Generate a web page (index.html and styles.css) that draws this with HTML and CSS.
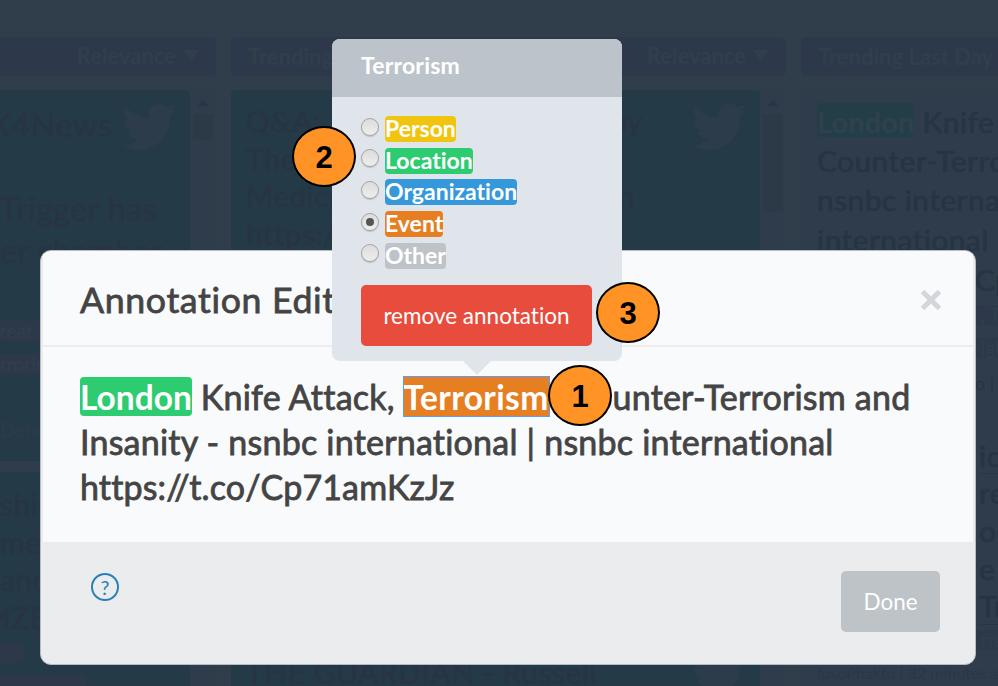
FILE: index.html
```html
<!DOCTYPE html>
<html lang="en">
<head>
<meta charset="utf-8">
<title>Annotation Editor</title>
<link rel="stylesheet" href="styles.css">
</head>
<body>
<svg class="defs" aria-hidden="true">
  <symbol id="bird" viewBox="0 0 53 46">
    <path d="M0 41C6 42 11 40 16 36C11 35 8 33 6 28H11C5 26 2 22 2 16L7 17C2 13 1 7 3 2C9 9 17 13 27 14C25 6 30 0 38 0C41 0 44 1 46 3L53 1C52 4 50 5 48 7L53 6C52 9 50 10 48 12C49 31 35 46 17 46C11 46 5 44 0 41Z"/>
  </symbol>
</svg>
<main class="board">
  <section class="column column-a">
    <header class="column-head"><span class="sort">Relevance <i class="caret"></i></span></header>
    <div class="column-body">
      <div class="cards">
        <article class="card first">
          <svg class="bird"><use href="#bird"/></svg>
          <div class="copy"><p class="out">K4News</p><p>&nbsp;</p><p>Trigger has</p><p>er chamber</p></div>
          <div class="tag">reat</div><div class="tag">rrorism</div><div class="details">Details</div>
        </article>
        <article class="card second">
          <div class="copy"><p class="ruled">shing</p><p>ment</p><p>and</p><p class="ruled out">MZE</p></div>
          <div class="tag short"></div><div class="tag medium"></div>
        </article>
      </div>
      <div class="scroll"><i class="up"></i><i class="thumb"></i></div>
    </div>
  </section>
  <section class="column column-b">
    <header class="column-head"><span>Trending</span><span class="sort">Relevance <i class="caret"></i></span></header>
    <div class="column-body">
      <div class="cards">
        <article class="card tall">
          <svg class="bird"><use href="#bird"/></svg>
          <div class="copy"><p><span>Q&amp;A:</span><span>ny</span></p><p>The</p><p class="ruled"><span>Medical</span><span class="in">n</span></p><p>https://</p></div>
        </article>
        <article class="card last">
          <svg class="bird"><use href="#bird"/></svg>
          <div class="copy"><p>THE GUARDIAN - Russell</p></div>
        </article>
      </div>
      <div class="scroll"><i class="up"></i><i class="thumb"></i></div>
    </div>
  </section>
  <section class="column column-c">
    <header class="column-head"><span>Trending Last Day</span></header>
    <div class="feed">
      <div class="copy"><p><mark>London</mark> Knife</p><p>Counter-Terrorism</p><p>nsnbc international</p><p>international</p><p class="edge">Cp71</p></div>
      <div class="tag">, Te</div><div class="tag">igh</div><div class="by">o | C</div>
      <div class="copy more"><p class="ruled">ic</p><p>re</p><p>oo</p><p>e a</p><p class="ruled">Tru</p></div>
      <div class="tag">risi</div>
      <div class="author">IpsoPhakto | 32 minutes ago</div>
    </div>
  </section>
</main>

<div class="modal">
  <header class="modal-head"><h1>Annotation Editor</h1>
    <svg class="close" viewBox="0 0 24 24"><path d="M3.5 3.5L20.5 20.5M20.5 3.5L3.5 20.5"/></svg>
  </header>
  <div class="modal-body">
    <p><span class="hit london">London</span><span class="mid"> Knife Attack, </span><span class="hit terrorism">Terrorism</span><span class="rest">, Counter-Terrorism and</span></p>
    <p class="l2">Insanity - nsnbc international | nsnbc international</p>
    <p class="l3">https://t.co/Cp71amKzJz</p>
  </div>
  <footer class="modal-foot"><span class="help">?</span><button class="done">Done</button></footer>
</div>

<div class="popover">
  <header>Terrorism</header>
  <div class="popover-body">
    <label><i class="radio"></i><span class="type person">Person</span></label>
    <label><i class="radio"></i><span class="type location">Location</span></label>
    <label><i class="radio"></i><span class="type organization">Organization</span></label>
    <label><i class="radio on"></i><span class="type event">Event</span></label>
    <label><i class="radio"></i><span class="type other">Other</span></label>
    <button class="remove">remove annotation</button>
  </div>
</div>
<div class="badge one">1</div>
<div class="badge two">2</div>
<div class="badge three">3</div>
</body>
</html>
```
FILE: styles.css
```css
* { box-sizing: border-box; }
body { margin: 0; width: 998px; height: 686px; overflow: hidden; position: relative; background: #303d4a; font-family: Lato, sans-serif; font-variant-ligatures: none; }
p, h1 { margin: 0; white-space: nowrap; }
button { border: 0; font-family: inherit; padding: 0; font-variant-ligatures: none; }
.defs { position: absolute; width: 0; height: 0; }

/* dimmed board */
.board { display: grid; grid-template-columns: 216px 555px 197px; gap: 15px; padding-top: 37px; width: 998px; height: 686px; overflow: hidden; color: #283445; }
.column { min-width: 0; overflow: hidden; }
.column-head { height: 39px; border-radius: 5px; background: #2d394a; color: #303f4c; font-weight: 700; font-size: 22px; line-height: 40px; padding: 0 17px; display: flex; justify-content: space-between; white-space: nowrap; }
.column-a .column-head { border-radius: 0 5px 5px 0; }
.column-c .column-head { border-radius: 5px 0 0 5px; }
.sort { margin-left: auto; display: flex; align-items: center; gap: 7px; line-height: 36px; padding-bottom: 2px; }
.caret { border: 8px solid transparent; border-top: 11px solid #303f4c; border-bottom: 0; }
.column-body { display: flex; gap: 3px; margin-top: 14px; height: 600px; background: #2f3c4b; }
.cards { flex: 1; min-width: 0; }
.scroll { width: 23px; padding: 10px 3px 0 0; }
.up { display: block; width: 0; margin: 0 auto 8px; border: 5px solid transparent; border-bottom: 6px solid #293544; border-top: 0; }
.thumb { display: block; height: 26px; background: #2c3947; }
.column-b .thumb { height: 98px; }
.card { position: relative; background: #243a46; overflow: hidden; }
.card .copy, .feed .copy { -webkit-text-stroke: 0.7px; letter-spacing: .5px; }
.bird { position: absolute; right: 15px; top: 14px; width: 53px; height: 46px; fill: #2d3c4b; }
.first { height: 371px; border-radius: 0 5px 5px 0; padding-top: 14px; margin-bottom: 11px; }
.first .copy { font-size: 32px; line-height: 42px; }
.first .copy + .tag { margin-top: 49px; }
.first .out { margin-left: -10px; }
.tag { height: 20px; margin-bottom: 13px; background: #2d394a; color: #303f4c; font-size: 19px; line-height: 19px; white-space: nowrap; }
.details { color: #2d3a49; font-size: 19px; margin-top: 44px; }
.second { height: 240px; padding-top: 14px; }
.second .copy { font-size: 30px; line-height: 37.5px; }
.second .out { margin-left: -17px; }
.second .tag { margin: 7px 0 12px; border-radius: 0 5px 5px 0; }
.second .short { width: 24px; }
.second .medium { width: 86px; }
.ruled { box-shadow: inset 0 -1px #283746; }
.tall { height: 566px; border-radius: 5px 5px 0 0; padding: 12px 117px 0 15px; }
.tall .copy { font-size: 29.5px; line-height: 37.6px; }
.tall p { display: flex; justify-content: space-between; }
.tall .in { margin-right: 8px; }
.last { height: 60px; padding: 0 15px; }
.last .copy { font-size: 30px; line-height: 33px; }
.last .bird { top: -4px; }
.feed { margin-top: 14px; height: 610px; background: #2f3c4b; padding: 12px 0 0 16px; }
.feed .copy { font-size: 29.8px; line-height: 39.2px; color: #263443; }
.feed mark { display: inline-block; height: 34px; line-height: 38px; border-radius: 4px; background: #243e48; color: #2f414f; font-size: 29px; letter-spacing: .1px; font-weight: 700; -webkit-text-stroke: 0; }
.feed .edge { padding-left: 158px; line-height: 41px; }
.feed .tag { padding-left: 164px; margin: 5px 0 13px; }
.feed .by { padding-left: 158px; font-size: 18px; margin-top: 14px; white-space: nowrap; }
.feed .more { padding-left: 162px; line-height: 37.6px; margin-top: 43px; }
.author { font-size: 16px; margin-top: 4px; color: #28384a; white-space: nowrap; }

/* dialog */
.modal { position: absolute; left: 40px; top: 250px; width: 936px; height: 415px; border: 1px solid #b7bcc2; border-radius: 11px; background: #ebecee; overflow: hidden; color: #444; display: flex; flex-direction: column; }
.modal-head { height: 96px; margin: 0 2px; padding: 0 30px 0 37px; display: flex; align-items: center; justify-content: space-between; background: #f9fafc; border-bottom: 2px solid #ebedef; }
h1 { font-size: 35.7px; font-weight: 400; padding-top: 2px; letter-spacing: .65px; -webkit-text-stroke: 0.8px; }
.close { width: 24px; height: 24px; margin-top: 4px; fill: none; stroke: #d2d6da; stroke-width: 5; }
.modal-body { flex: 1; margin: 0 2px; padding: 27px 37px 0; background: #f9fafc; font-size: 34px; font-weight: 400; line-height: 45px; -webkit-text-stroke: 0.8px; }
.hit { display: inline-block; height: 39px; line-height: 40px; color: #fff; font-size: 33.5px; font-weight: 700; vertical-align: top; margin-top: 3px; -webkit-text-stroke: 0; }
.london { background: #2ecc71; border-radius: 4px; }
.terrorism { background: #e67e22; outline: 1px solid #5b9dff; letter-spacing: .4px; }
.mid { letter-spacing: .22px; }
.rest { letter-spacing: .2px; margin-left: 5px; }
.l2 { letter-spacing: .22px; }
.l3 { letter-spacing: .14px; }
.modal-foot { height: 122px; padding: 29px 35px 0 50px; display: flex; justify-content: space-between; align-items: flex-start; }
.help { width: 28px; height: 28px; margin-top: 2px; border: 2px solid #2980b9; border-radius: 50%; color: #2980b9; font-size: 20px; line-height: 24px; text-align: center; }
.done { width: 99px; height: 61px; border-radius: 5px; background: #bdc3c7; color: #fff; font-size: 22.5px; }

/* annotation popover */
.popover { position: absolute; left: 332px; top: 39px; width: 290px; height: 322px; border-radius: 8px; background: #e0e4eb; }
.popover::after { content: ""; position: absolute; left: 131px; top: 322px; border: 14px solid transparent; border-top-color: #e0e4eb; border-bottom: 0; }
.popover header { height: 58px; padding-left: 29px; border-radius: 8px 8px 0 0; background: #bdc3ca; color: #fff; font-size: 23px; font-weight: 700; line-height: 53px; letter-spacing: .2px; }
.popover-body { padding: 16px 29px; }
.popover label { display: flex; gap: 6px; height: 31.6px; align-items: center; }
.radio { width: 18px; height: 18px; margin-top: -4px; border: 1px solid #a5a5a5; border-radius: 50%; background: linear-gradient(#dcdcdc, #eee); box-shadow: 0 1px 1px #b9bdc4; display: grid; place-items: center; }
.radio.on::after { content: ""; width: 8px; height: 8px; border-radius: 50%; background: #555; }
.type { height: 26px; border-radius: 4px; color: #fff; font-weight: 700; font-size: 23px; line-height: 25px; margin-top: 1px; }
.person { background: #f1c40f; }
.location { background: #2ecc71; }
.organization { background: #3498db; }
.event { background: #e67e22; }
.other { background: #bdc3c7; }
.remove { display: block; width: 231px; height: 61px; margin-top: 14px; border-radius: 5px; background: #e74c3c; color: #fff; font-size: 22.5px; }

/* numbered callouts */
.badge { position: absolute; width: 64px; height: 61px; border: 2px solid #000; border-radius: 50%; background: #ff9326; color: #000; font: 700 31px/59px "Liberation Sans", sans-serif; text-align: center; }
.one { left: 548px; top: 365px; }
.two { left: 292px; top: 126px; }
.three { left: 596px; top: 282px; }
```
